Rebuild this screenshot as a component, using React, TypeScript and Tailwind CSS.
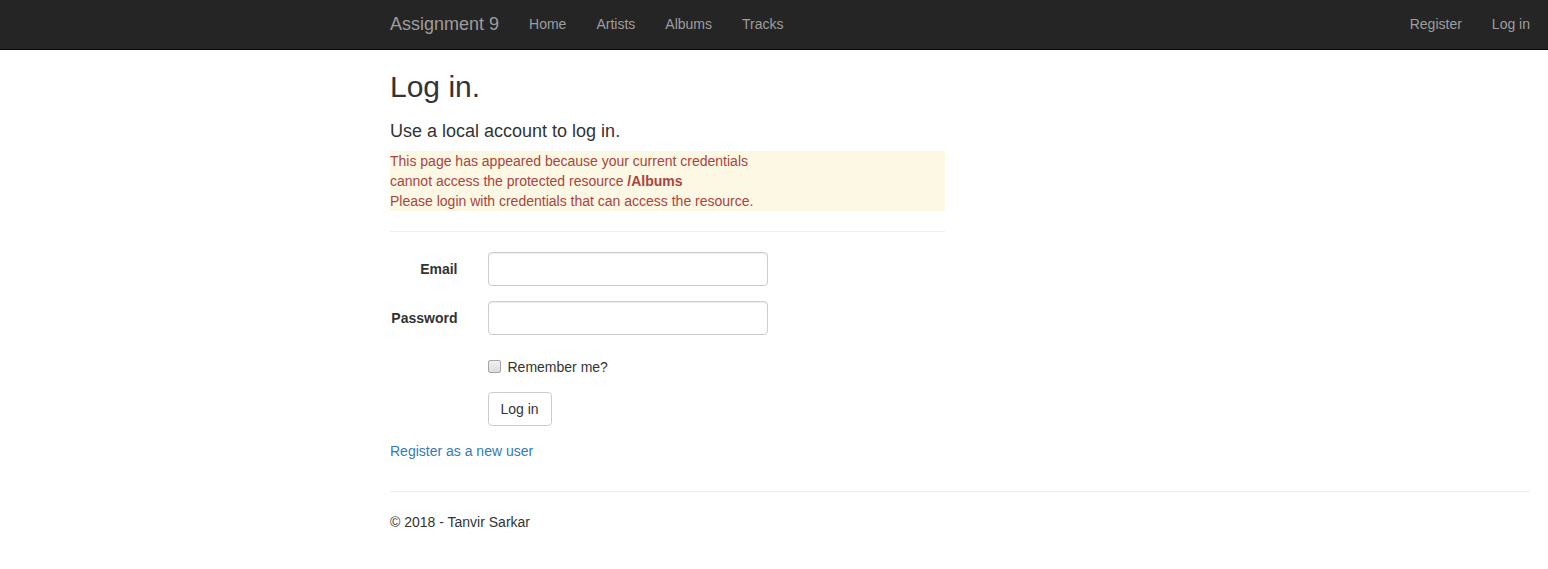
import React from "react";

const font = { fontFamily: '"Liberation Sans", Arial, Helvetica, sans-serif' };

function NavLink({ children }: { children: React.ReactNode }) {
  return (
    <a className="block px-[15px] pt-[14px] pb-[15px] text-[14px] leading-[20px] text-[#9d9d9d]">
      {children}
    </a>
  );
}

function FormRow({ label, type }: { label: string; type: string }) {
  return (
    <div className="flex mx-[-15px] mb-[15px]">
      <label className="w-[97.5px] shrink-0 px-[15px] pt-[7px] text-right font-bold text-[14px] leading-[20px] text-[#333]">
        {label}
      </label>
      <div className="flex-1 px-[15px]">
        <input
          type={type}
          className="block w-full max-w-[280px] h-[34px] px-[12px] py-[6px] text-[14px] leading-[20px] text-[#555] bg-white border border-[#ccc] rounded-[4px] shadow-[inset_0_1px_1px_rgba(0,0,0,0.075)] outline-none"
        />
      </div>
    </div>
  );
}

export default function App() {
  return (
    <div className="min-h-[569px] w-[1548px] bg-white text-[#333] text-[14px] leading-[20px]" style={font}>
      <nav className="h-[50px] bg-[#252525] border-b border-[#080808]">
        <div className="ml-[375px] w-[1170px] px-[15px] flex items-start justify-between">
          <div className="flex">
            <a className="block ml-[-15px] px-[15px] pt-[14px] pb-[15px] h-[50px] text-[18px] leading-[20px] text-[#9d9d9d]">
              Assignment 9
            </a>
            <NavLink>Home</NavLink>
            <NavLink>Artists</NavLink>
            <NavLink>Albums</NavLink>
            <NavLink>Tracks</NavLink>
          </div>
          <div className="flex mr-[-15px]">
            <NavLink>Register</NavLink>
            <NavLink>Log in</NavLink>
          </div>
        </div>
      </nav>

      <div className="ml-[375px] w-[1170px] px-[15px]">
        <h2 className="mt-[20px] mb-[10px] text-[30px] leading-[33px] font-medium text-[#333]">Log in.</h2>
        <div className="flow-root">
          <div className="w-[555px]">
            <h4 className="mt-[8px] mb-[10px] text-[18px] leading-[20px] font-medium text-[#333]">
              Use a local account to log in.
            </h4>
            <div className="bg-[#fcf8e3] text-[#a94442] text-[14px] leading-[20px]">
              This page has appeared because your current credentials
              <br />
              cannot access the protected resource <b>/Albums</b>
              <br />
              Please login with credentials that can access the resource.
            </div>
            <hr className="mt-[20px] mb-[20px] border-0 border-t border-[#eee]" />
            <FormRow label="Email" type="email" />
            <FormRow label="Password" type="password" />
            <div className="flex mx-[-15px] mb-[15px]">
              <div className="w-[97.5px] shrink-0" />
              <div className="flex-1 px-[15px] pt-[7px] min-h-[27px]">
                <label className="flex items-start text-[14px] leading-[20px] text-[#333]">
                  <span className="mt-[3px] w-[13px] h-[13px] rounded-[2px] border border-[#a5a5a5] bg-[linear-gradient(#f0f0f0,#dcdcdc)] shrink-0" />
                  <span className="ml-[7px]">Remember me?</span>
                </label>
              </div>
            </div>
            <div className="flex mx-[-15px] mb-[15px]">
              <div className="w-[97.5px] shrink-0" />
              <div className="flex-1 px-[15px]">
                <button className="h-[34px] px-[12px] py-[6px] text-[14px] leading-[20px] text-[#333] bg-white border border-[#ccc] rounded-[4px]">
                  Log in
                </button>
              </div>
            </div>
            <p className="mb-[10px]">
              <a className="text-[#337ab7]">Register as a new user</a>
            </p>
          </div>
        </div>
        <hr className="mt-[20px] mb-[20px] border-0 border-t border-[#eee]" />
        <footer>
          <p className="mb-[10px]">© 2018 - Tanvir Sarkar</p>
        </footer>
      </div>
    </div>
  );
}
